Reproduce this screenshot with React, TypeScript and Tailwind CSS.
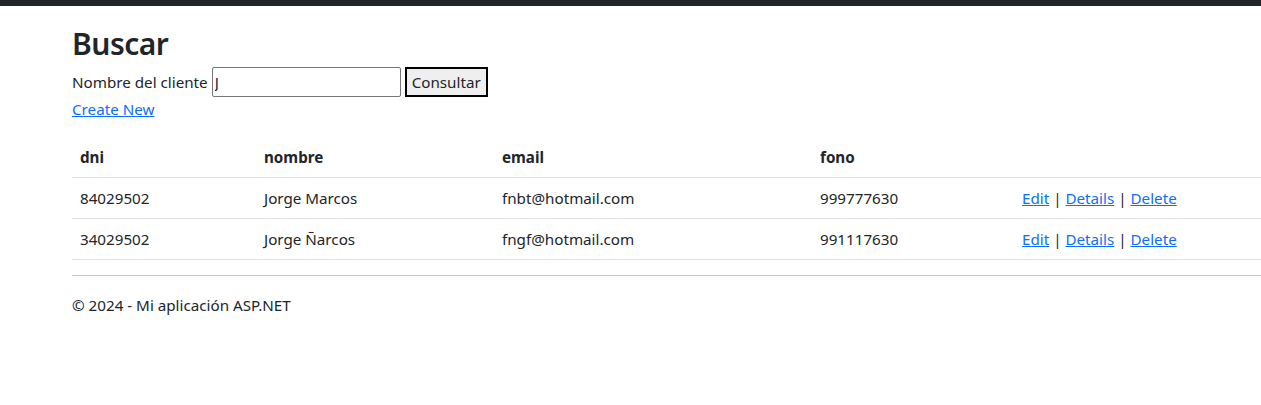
const rows = [
    { dni: "84029502", nombre: "Jorge Marcos", email: "fnbt@hotmail.com", fono: "999777630" },
    { dni: "34029502", nombre: "Jorge Ñarcos", email: "fngf@hotmail.com", fono: "991117630" },
]

const App = () => {
    return (
        <div className="min-h-[405px] bg-white text-[15.2px] leading-[24px] text-[#212529] font-['Noto_Sans',sans-serif]">
            <div className="h-[6px] bg-[#212529]" />
            <main className="pl-[72px] pt-[17px]">
                <h1 className="mb-[4px] pt-[2px] text-[30px] font-semibold leading-[38px] tracking-[-0.5px]">Buscar</h1>
                <form className="flex items-center gap-[4px]" onSubmit={e => e.preventDefault()}>
                    <label htmlFor="nombre">Nombre del cliente</label>
                    <input
                        id="nombre"
                        defaultValue="J"
                        className="h-[30px] w-[189px] rounded-[2px] border border-[#767676] px-[2px] text-[15.2px]"
                    />
                    <button
                        type="submit"
                        className="h-[30px] w-[83px] border-2 border-black bg-[#efefef] text-[15.2px]"
                    >
                        Consultar
                    </button>
                </form>
                <p className="mb-[16px]">
                    <a href="#" className="text-[#0d6efd] underline">Create New</a>
                </p>
                <table className="w-[1189px] border-collapse text-left">
                    <thead>
                        <tr className="border-b border-[#dee2e6]">
                            <th className="w-[184px] px-[8px] py-[8px] font-bold">dni</th>
                            <th className="w-[238px] px-[8px] py-[8px] font-bold">nombre</th>
                            <th className="w-[318px] px-[8px] py-[8px] font-bold">email</th>
                            <th className="w-[202px] px-[8px] py-[8px] font-bold">fono</th>
                            <th className="px-[8px] py-[8px]"></th>
                        </tr>
                    </thead>
                    <tbody>
                        {rows.map(r => (
                            <tr key={r.dni} className="border-b border-[#dee2e6]">
                                <td className="px-[8px] py-[8px]">{r.dni}</td>
                                <td className="px-[8px] py-[8px]">{r.nombre}</td>
                                <td className="px-[8px] py-[8px]">{r.email}</td>
                                <td className="px-[8px] py-[8px]">{r.fono}</td>
                                <td className="px-[8px] py-[8px]">
                                    <a href="#" className="text-[#0d6efd] underline">Edit</a> |{" "}
                                    <a href="#" className="text-[#0d6efd] underline">Details</a> |{" "}
                                    <a href="#" className="text-[#0d6efd] underline">Delete</a>
                                </td>
                            </tr>
                        ))}
                    </tbody>
                </table>
                <hr className="mt-[15px] border-t border-[#c8c8c8]" />
                <footer className="pt-[17px]">© 2024 - Mi aplicación ASP.NET</footer>
            </main>
        </div>
    )
}

export default App
